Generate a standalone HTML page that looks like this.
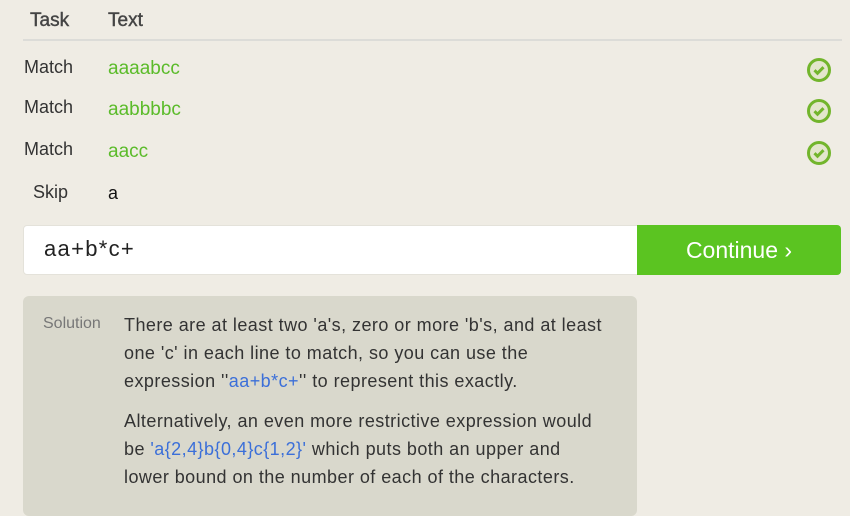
<!DOCTYPE html>
<html><head><meta charset="utf-8"><style>
*{margin:0;padding:0;box-sizing:border-box}
body{width:850px;height:503px;background:#efece4;font-family:"Liberation Sans",sans-serif;position:relative;overflow:hidden;color:#333}
.a{position:absolute;white-space:nowrap}
.h{font-size:19px;color:#444;top:10px;-webkit-text-stroke:0.4px #444}
.t{font-size:18px;color:#333}
.g{font-size:19px;color:#5bbb2a}
.ck{position:absolute;width:26px;height:26px}
.sol{position:absolute;left:23px;top:296px;width:614px;height:220px;background:#d9d8cc;border-radius:6px}
.p{position:absolute;left:124px;font-size:18px;letter-spacing:0.45px;line-height:28px;color:#333;white-space:nowrap}
.b{color:#3b6fd9}
</style></head><body>
<div class="a h" style="left:30px">Task</div>
<div class="a h" style="left:108px">Text</div>
<div class="a" style="left:23px;top:39px;width:819px;height:2px;background:#dcdcd8"></div>
<div class="a t" style="left:24px;top:57px">Match</div>
<div class="a g" style="left:108px;top:58px">aaaabcc</div>
<div class="a t" style="left:24px;top:97px">Match</div>
<div class="a g" style="left:108px;top:99px">aabbbbc</div>
<div class="a t" style="left:24px;top:139px">Match</div>
<div class="a g" style="left:108px;top:141px">aacc</div>
<div class="a t" style="left:33px;top:182px">Skip</div>
<div class="a t" style="left:108px;top:183px;color:#111">a</div>
<svg class="ck" style="left:806px;top:57px" viewBox="0 0 26 26"><circle cx="13" cy="13" r="10.5" fill="#e3e6cc" stroke="#72b52c" stroke-width="3"/><path d="M8.5 13.2l3 3 6-6" fill="none" stroke="#72b52c" stroke-width="3"/></svg>
<svg class="ck" style="left:806px;top:98px" viewBox="0 0 26 26"><circle cx="13" cy="13" r="10.5" fill="#e3e6cc" stroke="#72b52c" stroke-width="3"/><path d="M8.5 13.2l3 3 6-6" fill="none" stroke="#72b52c" stroke-width="3"/></svg>
<svg class="ck" style="left:806px;top:140px" viewBox="0 0 26 26"><circle cx="13" cy="13" r="10.5" fill="#e3e6cc" stroke="#72b52c" stroke-width="3"/><path d="M8.5 13.2l3 3 6-6" fill="none" stroke="#72b52c" stroke-width="3"/></svg>
<div class="a" style="left:23px;top:225px;width:618px;height:50px;background:#fff;border:1px solid #e4e2da;border-radius:4px 0 0 4px"></div>
<div class="a" style="left:44px;top:236px;font-size:22px;letter-spacing:1.3px;color:#222">aa+b*c+</div>
<div class="a" style="left:637px;top:225px;width:204px;height:50px;background:#5bc421;border-radius:0 4px 4px 0;color:#fff;font-size:23px;text-align:center;line-height:50px">Continue ›</div>
<div class="sol"></div>
<div class="a" style="left:43px;top:315px;font-size:16px;color:#777">Solution</div>
<div class="p" style="top:311px">There are at least two 'a's, zero or more 'b's, and at least<br>one 'c' in each line to match, so you can use the<br>expression ''<span class="b">aa+b*c+</span>'' to represent this exactly.</div>
<div class="p" style="top:407px">Alternatively, an even more restrictive expression would<br>be <span class="b">'a{2,4}b{0,4}c{1,2}'</span> which puts both an upper and<br>lower bound on the number of each of the characters.</div>
</body></html>
